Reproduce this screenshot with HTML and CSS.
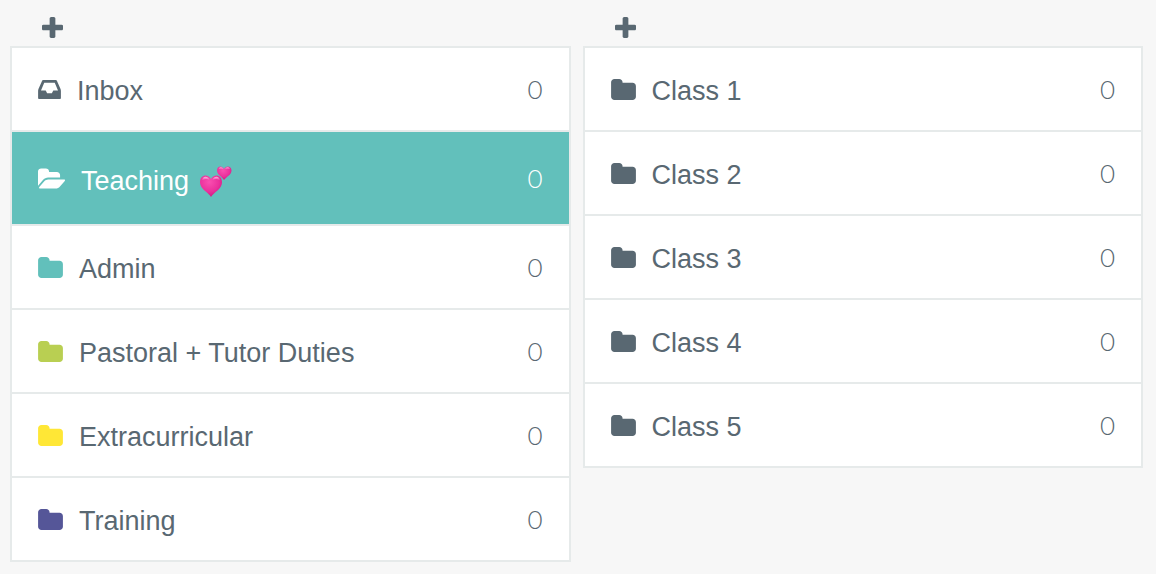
FILE: index.html
```html
<!DOCTYPE html>
<html lang="en">
<head>
<meta charset="utf-8">
<meta name="viewport" content="width=device-width, initial-scale=1">
<title>Folders</title>
<link rel="stylesheet" href="styles.css">
</head>
<body>
<svg class="sprite" aria-hidden="true">
  <symbol id="plus" viewBox="0 0 1408 1408"><path d="M1408 608v192q0 40-28 68t-68 28H896v416q0 40-28 68t-68 28H608q-40 0-68-28t-28-68V896H96q-40 0-68-28T0 800V608q0-40 28-68t68-28h416V96q0-40 28-68t68-28h192q40 0 68 28t28 68v416h416q40 0 68 28t28 68z"/></symbol>
  <symbol id="folder" viewBox="64 128 1664 1408"><path d="M1728 608v704q0 92-66 158t-158 66h-1216q-92 0-158-66t-66-158v-960q0-92 66-158t158-66h320q92 0 158 66t66 158v32h672q92 0 158 66t66 158z"/></symbol>
  <symbol id="folder-open" viewBox="0 128 1879 1408"><path d="M1879 952q0 31-31 66l-336 396q-43 51-120.5 86.500t-143.500 35.500h-1088q-34 0-60.500-13t-26.500-43q0-31 31-66l336-396q43-51 120.500-86.500t143.500-35.500h1088q34 0 60.500 13t26.500 43zm-343-344v160h-832q-94 0-197 47.500t-164 119.500l-337 396-5 6q0-4-.5-12.500t-.5-12.500v-960q0-92 66-158t158-66h320q92 0 158 66t66 158v32h544q92 0 158 66t66 158z"/></symbol>
  <symbol id="inbox" viewBox="0 128 1536 1280"><path d="M1023 832h316q-1-3-2.500-8.500t-2.500-7.500l-212-496h-708l-212 496q-1 3-2.500 8.500t-2.500 7.500h316l95 192h320zm513 30v482q0 26-19 45t-45 19h-1408q-26 0-45-19t-19-45v-482q0-62 25-123l238-552q10-25 36.500-42t52.500-17h832q26 0 52.500 17t36.500 42l238 552q25 61 25 123z"/></symbol>
</svg>
<main class="columns">
  <section class="column">
    <button class="add" type="button" aria-label="Add folder"><svg class="icon icon-plus"><use href="#plus"/></svg></button>
    <ul class="list">
      <li><button class="row" type="button"><svg class="icon icon-inbox"><use href="#inbox"/></svg><span class="name">Inbox</span><span class="count">0</span></button></li>
      <li><button class="row row-active" type="button" aria-current="true"><svg class="icon icon-open"><use href="#folder-open"/></svg><span class="name">Teaching
        <svg class="hearts" viewBox="0 0 32 32" role="img" aria-label="two hearts">
          <defs>
            <radialGradient id="pink" cx=".42" cy=".3" r=".75"><stop offset="0" stop-color="#f94fb0"/><stop offset=".6" stop-color="#ea309c"/><stop offset="1" stop-color="#cc147d"/></radialGradient>
            <linearGradient id="shine" x1="0" y1="0" x2="0" y2="1"><stop offset="0" stop-color="#fff" stop-opacity=".65"/><stop offset="1" stop-color="#fff" stop-opacity="0"/></linearGradient>
          </defs>
          <path fill="url(#pink)" d="M11 31C9 27 0 23 0 16.500C0 8 8.500 8 11 13C13.500 8 22 8 22 16.500C22 23 13 27 11 31z"/>
          <path fill="url(#shine)" d="M2 14.500C2.500 9.500 8 9.500 9.500 14C7 12.500 5 12.500 2 14.500zM12.500 14C14 9.500 19.500 9.500 20 14.500C17 12.500 15 12.500 12.500 14z"/>
          <path fill="url(#pink)" d="M24 14C22.500 11 17 9 17 4.500C17-.5 22.500-.5 24 3C25.500-.5 31.500-.5 31.500 4.500C31.500 9 26 11 24 14z"/>
          <path fill="url(#shine)" d="M18.500 3.500C19 .5 22.500.5 23.500 3.500C21.500 2.500 20.500 2.500 18.500 3.500zM25 3.500C26 .5 29.500.5 30 3.500C28 2.500 27 2.500 25 3.500z"/>
        </svg></span><span class="count">0</span></button></li>
      <li><button class="row" type="button"><svg class="icon teal"><use href="#folder"/></svg><span class="name">Admin</span><span class="count">0</span></button></li>
      <li><button class="row" type="button"><svg class="icon green"><use href="#folder"/></svg><span class="name">Pastoral + Tutor Duties</span><span class="count">0</span></button></li>
      <li><button class="row" type="button"><svg class="icon yellow"><use href="#folder"/></svg><span class="name">Extracurricular</span><span class="count">0</span></button></li>
      <li><button class="row" type="button"><svg class="icon purple"><use href="#folder"/></svg><span class="name">Training</span><span class="count">0</span></button></li>
    </ul>
  </section>
  <section class="column">
    <button class="add" type="button" aria-label="Add class"><svg class="icon icon-plus"><use href="#plus"/></svg></button>
    <ul class="list">
      <li><button class="row" type="button"><svg class="icon"><use href="#folder"/></svg><span class="name">Class 1</span><span class="count">0</span></button></li>
      <li><button class="row" type="button"><svg class="icon"><use href="#folder"/></svg><span class="name">Class 2</span><span class="count">0</span></button></li>
      <li><button class="row" type="button"><svg class="icon"><use href="#folder"/></svg><span class="name">Class 3</span><span class="count">0</span></button></li>
      <li><button class="row" type="button"><svg class="icon"><use href="#folder"/></svg><span class="name">Class 4</span><span class="count">0</span></button></li>
      <li><button class="row" type="button"><svg class="icon"><use href="#folder"/></svg><span class="name">Class 5</span><span class="count">0</span></button></li>
    </ul>
  </section>
</main>
</body>
</html>
```
FILE: styles.css
```css
* { box-sizing: border-box; }

body {
  margin: 0;
  background: #f7f7f7;
  color: #596872;
  font-family: "Liberation Sans", Arial, sans-serif;
  font-size: 27px;
}

button {
  border: 0;
  background: none;
  color: inherit;
  font: inherit;
  text-align: left;
  cursor: pointer;
}

.sprite { display: none; }

.columns {
  display: grid;
  grid-template-columns: 1fr 1fr;
  align-items: start;
  gap: 12px;
  padding: 10px 13px 12px 10px;
}

.add {
  display: flex;
  align-items: center;
  height: 36px;
  padding: 0 32px 1px;
}

.list {
  margin: 0;
  padding: 0;
  list-style: none;
  border: 2px solid #e6eaea;
  background: #fff;
}

.list li + li { border-top: 2px solid #e6eaea; }

.row {
  display: flex;
  align-items: center;
  gap: 16px;
  width: 100%;
  padding: 26px;
  line-height: 30px;
}

.row-active {
  padding-block: 31px;
  background: #62c0bb;
  color: #fff;
}

.name {
  flex: 1;
  padding-top: 2px;
  margin-bottom: -2px;
}

.row-active .name {
  padding-top: 3px;
  margin-bottom: -3px;
}

.count {
  font-family: Lato, sans-serif;
  font-size: 26px;
  font-weight: 300;
}

.icon {
  flex: none;
  width: 25px;
  height: 21px;
  fill: currentColor;
}

.icon-plus { width: 21px; height: 21px; }
.icon-inbox { width: 23px; height: 19px; }
.icon-open { width: 27px; height: 21px; }

.teal { color: #62c0bb; }
.green { color: #b9cf52; }
.yellow { color: #ffe736; }
.purple { color: #555698; }

.hearts {
  width: 32px;
  height: 32px;
  margin: -10px 0 -10px 3px;
  vertical-align: 2px;
}
```
